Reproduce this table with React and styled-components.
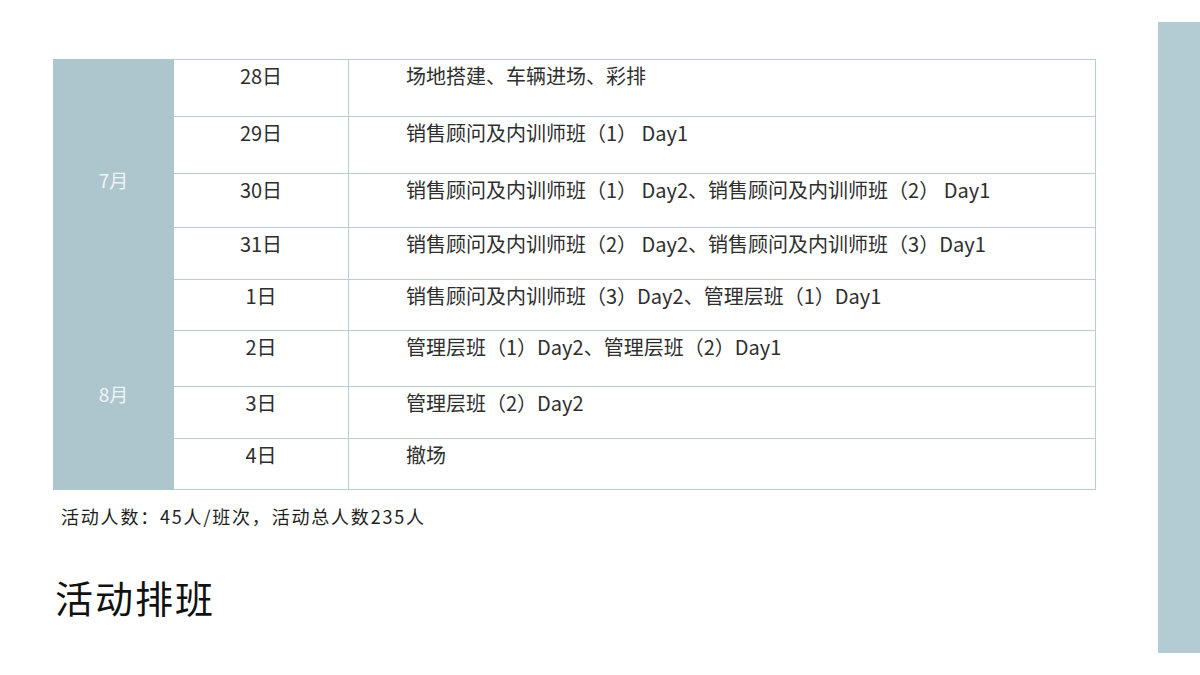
import React from "react";
import styled, { createGlobalStyle } from "styled-components";

const GlobalStyle = createGlobalStyle`
  html, body {
    margin: 0;
    padding: 0;
    background: #ffffff;
  }
  body {
    font-family: "Noto Sans CJK SC", "Noto Sans", sans-serif;
    color: #333333;
  }
`;

const Page = styled.div`
  width: 1200px;
  height: 675px;
  display: flex;
  overflow: hidden;
  background: #ffffff;
`;

const Main = styled.div`
  width: 1105px;
  padding: 59px 0 0 53px;
  box-sizing: border-box;
  display: flex;
  flex-direction: column;
`;

const SideBar = styled.div`
  margin: 22px 0 0 53px;
  width: 42px;
  height: 631px;
  background: #b3cbd3;
`;

const Table = styled.table`
  width: 1043px;
  border-collapse: collapse;
  table-layout: fixed;
`;

const MonthCell = styled.td`
  width: 120px;
  background: #adc6ce;
  border: 1px solid #adc6ce;
  color: #eef4f6;
  text-align: center;
  vertical-align: middle;
  font-size: 19px;
  padding: ${(p) => p.$shift}px 0 0 0;
`;

const DayCell = styled.td`
  width: 175px;
  height: ${(p) => p.$h}px;
  box-sizing: border-box;
  border: 1px solid #b8cdd4;
  text-align: center;
  vertical-align: top;
  padding: 1px 0 0 0;
  font-size: 20px;
  color: #2e2e2e;
`;

const TaskCell = styled.td`
  border: 1px solid #b8cdd4;
  vertical-align: top;
  padding: 1px 0 0 57px;
  font-size: 20px;
  color: #2e2e2e;
  white-space: nowrap;
`;

const Note = styled.div`
  margin: 13px 0 0 8px;
  font-size: 18px;
  letter-spacing: 1.8px;
  color: #1e1e1e;
`;

const Title = styled.h1`
  margin: 40px 0 0 2px;
  font-size: 38px;
  font-weight: 400;
  letter-spacing: 2px;
  color: #111111;
`;

const rows = [
  { day: "28日", task: "场地搭建、车辆进场、彩排", h: 57 },
  { day: "29日", task: "销售顾问及内训师班（1） Day1", h: 57 },
  { day: "30日", task: "销售顾问及内训师班（1） Day2、销售顾问及内训师班（2） Day1", h: 54 },
  { day: "31日", task: "销售顾问及内训师班（2） Day2、销售顾问及内训师班（3）Day1", h: 52 },
  { day: "1日", task: "销售顾问及内训师班（3）Day2、管理层班（1）Day1", h: 51 },
  { day: "2日", task: "管理层班（1）Day2、管理层班（2）Day1", h: 56 },
  { day: "3日", task: "管理层班（2）Day2", h: 52 },
  { day: "4日", task: "撤场", h: 51 },
];

export default function App() {
  return (
    <Page>
      <GlobalStyle />
      <Main>
        <Table>
          <colgroup>
            <col style={{ width: 120 }} />
            <col style={{ width: 175 }} />
            <col />
          </colgroup>
          <tbody>
            {rows.map((r, i) => (
              <tr key={r.day}>
                {i === 0 && (
                  <MonthCell rowSpan={4} $shift={20}>
                    7月
                  </MonthCell>
                )}
                {i === 4 && (
                  <MonthCell rowSpan={4} $shift={18}>
                    8月
                  </MonthCell>
                )}
                <DayCell $h={r.h}>{r.day}</DayCell>
                <TaskCell>{r.task}</TaskCell>
              </tr>
            ))}
          </tbody>
        </Table>
        <Note>活动人数：45人/班次，活动总人数235人</Note>
        <Title>活动排班</Title>
      </Main>
      <SideBar />
    </Page>
  );
}
